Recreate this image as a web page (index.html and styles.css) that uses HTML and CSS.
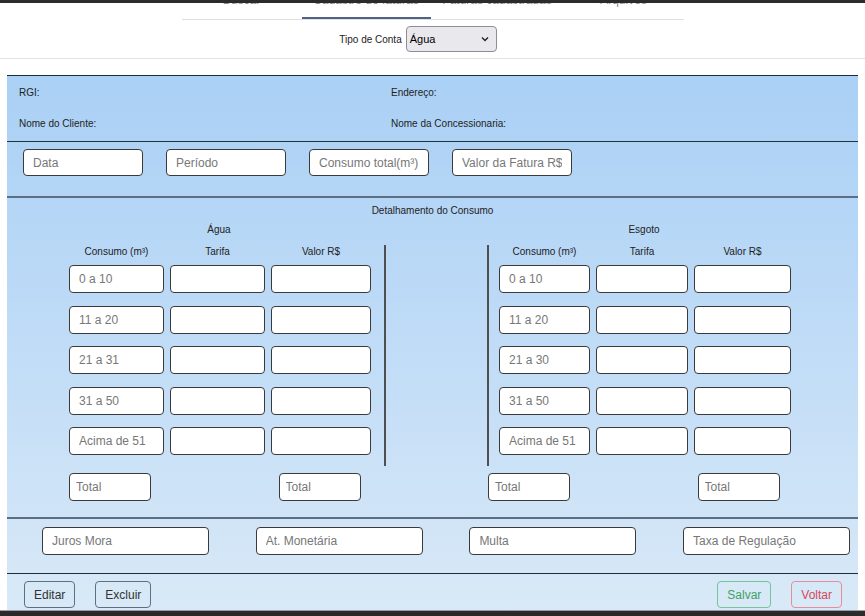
FILE: index.html
```html
<!DOCTYPE html>
<html lang="pt-BR">
<head>
<meta charset="utf-8">
<title>Cadastro de faturas</title>
<link rel="stylesheet" href="styles.css">
</head>
<body>
<div class="topbar"></div>
<nav class="tabs">
  <a class="tab tab-a"><span>Buscar</span></a>
  <a class="tab tab-b active"><span>Cadastro de faturas</span></a>
  <a class="tab tab-c"><span>Faturas cadastradas</span></a>
  <a class="tab tab-d"><span>Arquivos</span></a>
</nav>
<div class="tipo">
  <label class="tipo-label">Tipo de Conta</label>
  <div class="select">
    <span>Água</span>
    <svg class="chev" width="8" height="6" viewBox="0 0 8 6"><polyline points="1,1.5 4,4.5 7,1.5" fill="none" stroke="#222" stroke-width="1.4"/></svg>
  </div>
</div>
<main class="panel">
  <section class="info">
    <div class="lbl">RGI:</div>
    <div class="lbl">Endereço:</div>
    <div class="lbl">Nome do Cliente:</div>
    <div class="lbl">Nome da Concessionaria:</div>
  </section>
  <section class="geral">
    <input class="field f-geral" placeholder="Data">
    <input class="field f-geral" placeholder="Período">
    <input class="field f-geral" placeholder="Consumo total(m³)">
    <input class="field f-geral" placeholder="Valor da Fatura R$">
  </section>
  <section class="detalhe">
    <div class="det-title">Detalhamento do Consumo</div>
    <div class="blocks">
      <div class="block block-agua">
        <div class="block-title">Água</div>
        <div class="grid grid-agua">
          <div class="colh">Consumo (m³)</div><div class="colh">Tarifa</div><div class="colh">Valor R$</div>
          <input class="field" placeholder="0 a 10"><input class="field"><input class="field">
          <input class="field" placeholder="11 a 20"><input class="field"><input class="field">
          <input class="field" placeholder="21 a 31"><input class="field"><input class="field">
          <input class="field" placeholder="31 a 50"><input class="field"><input class="field">
          <input class="field" placeholder="Acima de 51"><input class="field"><input class="field">
        </div>
      </div>
      <div class="block block-esgoto">
        <div class="block-title">Esgoto</div>
        <div class="grid grid-esgoto">
          <div class="colh">Consumo (m³)</div><div class="colh">Tarifa</div><div class="colh">Valor R$</div>
          <input class="field" placeholder="0 a 10"><input class="field"><input class="field">
          <input class="field" placeholder="11 a 20"><input class="field"><input class="field">
          <input class="field" placeholder="21 a 30"><input class="field"><input class="field">
          <input class="field" placeholder="31 a 50"><input class="field"><input class="field">
          <input class="field" placeholder="Acima de 51"><input class="field"><input class="field">
        </div>
      </div>
    </div>
    <div class="totals">
      <input class="field f-total" placeholder="Total">
      <input class="field f-total" placeholder="Total">
      <input class="field f-total" placeholder="Total">
      <input class="field f-total" placeholder="Total">
    </div>
  </section>
  <section class="encargos">
    <input class="field" placeholder="Juros Mora">
    <input class="field" placeholder="At. Monetária">
    <input class="field" placeholder="Multa">
    <input class="field" placeholder="Taxa de Regulação">
  </section>
  <section class="acoes">
    <div class="left-btns">
      <button class="btn">Editar</button>
      <button class="btn">Excluir</button>
    </div>
    <div class="right-btns">
      <button class="btn btn-salvar">Salvar</button>
      <button class="btn btn-voltar">Voltar</button>
    </div>
  </section>
</main>
<div class="bottombar"></div>
</body>
</html>
```
FILE: styles.css
```css
html, body {
  margin: 0;
  padding: 0;
}
body {
  font-family: "Liberation Sans", Arial, sans-serif;
  background: #fff;
  color: #222;
  height: 616px;
  overflow: hidden;
}
.topbar {
  height: 3px;
  background: #2b2b2b;
}
.tabs {
  display: flex;
  width: 502px;
  margin: 0 auto;
  border-bottom: 1px solid #e0e0e0;
}
.tab {
  display: block;
  height: 16px;
  overflow: hidden;
  text-align: center;
  color: #8a8a8a;
  font-size: 12px;
}
.tab span {
  display: block;
  line-height: 14px;
  margin-top: -10px;
}
.tab-a { width: 120px; }
.tab-b { width: 129px; }
.tab-c { width: 133px; }
.tab-d { width: 120px; }
.tab.active {
  box-shadow: inset 0 -2px 0 #4e6385;
}
.tipo {
  display: flex;
  justify-content: center;
  align-items: center;
  gap: 4px;
  padding: 6px 29px 6px 0;
  border-bottom: 1px solid #e2e2e2;
}
.tipo-label {
  font-size: 10px;
  color: #222;
}
.select {
  box-sizing: border-box;
  width: 91px;
  height: 26px;
  border: 1px solid #8e8e98;
  border-radius: 4px;
  background: #e9e9ed;
  display: flex;
  align-items: center;
  justify-content: space-between;
  padding: 0 7px 0 3px;
  font-size: 11px;
  color: #000;
}
.panel {
  margin: 16px 7px 0;
  border-top: 1px solid #1d2b39;
  background: linear-gradient(#aad0f5, #c2ddf7 55%, #d9e9f7);
}
.lbl {
  font-size: 10px;
  line-height: 14px;
  color: #222;
}
.info {
  display: grid;
  grid-template-columns: 372px 1fr;
  row-gap: 17px;
  padding: 10px 0 10px 12px;
  border-bottom: 1px solid #22323f;
}
.field {
  box-sizing: border-box;
  height: 28px;
  border: 1px solid #3a3a3a;
  border-radius: 4px;
  background: #fff;
  font-family: "Liberation Sans", Arial, sans-serif;
  font-size: 12px;
  color: #222;
  padding: 0 9px;
  margin: 0;
  min-width: 0;
  width: 100%;
}
.field::placeholder {
  color: #777;
}
.geral {
  display: flex;
  gap: 23px;
  padding: 7px 0 20px 16px;
  border-bottom: 2px solid #5b6e83;
}
.f-geral {
  width: 120px;
  height: 27px;
}
.detalhe {
  padding: 6px 0 16px 62px;
  border-bottom: 2px solid #5b6e83;
}
.det-title {
  font-size: 10px;
  line-height: 14px;
  text-align: center;
  margin-left: -62px;
}
.blocks {
  display: flex;
  gap: 101px;
  margin-top: 5px;
}
.block-title {
  font-size: 10px;
  line-height: 14px;
  text-align: center;
  margin-bottom: 8px;
}
.block-agua .block-title { width: 300px; }
.block-esgoto .block-title { width: 290px; margin-left: 12px; }
.grid {
  display: grid;
  column-gap: 6px;
  row-gap: 12.5px;
  padding-bottom: 11px;
}
.grid-agua {
  grid-template-columns: 95px 95px 100px;
  padding-right: 13px;
  border-right: 2px solid #4f4f4f;
}
.grid-esgoto {
  grid-template-columns: 91px 92px 97px;
  padding-left: 10px;
  border-left: 2px solid #4f4f4f;
}
.colh {
  font-size: 10px;
  line-height: 14px;
  text-align: center;
  margin-bottom: -6.5px;
}
.totals {
  display: grid;
  grid-template-columns: repeat(4, 82px);
  column-gap: 127.5px;
  margin-top: 7px;
}
.f-total {
  padding: 0 6px;
}
.encargos {
  display: grid;
  grid-template-columns: repeat(4, 167px);
  column-gap: 46.7px;
  padding: 8px 0 18px 35px;
  border-bottom: 1px solid #1f2d3b;
}
.acoes {
  display: flex;
  justify-content: space-between;
  padding: 7px 16px 2px 17px;
}
.left-btns, .right-btns {
  display: flex;
  gap: 20px;
}
.btn {
  box-sizing: border-box;
  height: 27px;
  padding: 0 9px;
  border: 1px solid #5f6f80;
  border-radius: 4px;
  background: transparent;
  font-family: "Liberation Sans", Arial, sans-serif;
  font-size: 12px;
  color: #333;
}
.btn-salvar {
  border-color: #74c59a;
  color: #3fa263;
}
.btn-voltar {
  border-color: #e48d9c;
  color: #d5475c;
}
.bottombar {
  height: 5px;
  border-top: 1px solid #9aa0a6;
  background: #2b2b2b;
}
```
